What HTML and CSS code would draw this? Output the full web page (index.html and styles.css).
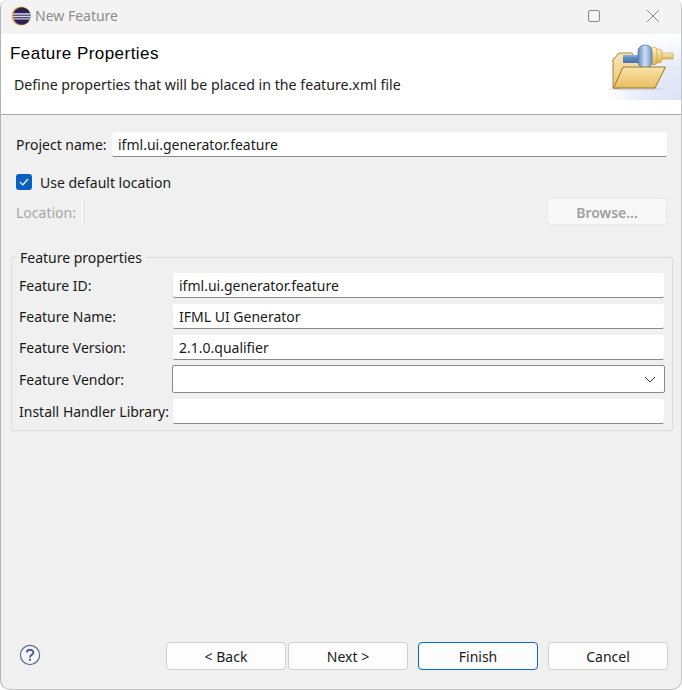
FILE: index.html
```html
<!DOCTYPE html>
<html lang="en">

<head>
    <meta charset="UTF-8">
    <meta name="viewport" content="width=device-width, initial-scale=1.0">
    <title>New Feature</title>
    <link rel="stylesheet" href="styles.css">
</head>

<body>

    <div class="window">
        <div class="titlebar">
            <svg class="app-icon" width="20" height="20" viewBox="0 0 20 20">
                <circle cx="10" cy="10" r="9.5" fill="#f0a544"/>
                <circle cx="10.8" cy="10" r="8.8" fill="#2c2255"/>
                <rect x="1.5" y="7.2" width="18" height="1.5" fill="#d8d6e4"/>
                <rect x="1.5" y="9.7" width="18.2" height="1.5" fill="#d8d6e4"/>
                <rect x="1.5" y="12.2" width="17.5" height="1.3" fill="#c9c6da"/>
            </svg>
            <span class="title">New Feature</span>
            <div class="window-controls">
                <svg width="12" height="12" viewBox="0 0 12 12">
                    <rect x="0.5" y="0.5" width="11" height="11" rx="1.5" fill="none" stroke="#8a8a8a"/>
                </svg>
                <svg width="12" height="12" viewBox="0 0 12 12">
                    <path d="M0 0L12 12M12 0L0 12" stroke="#8a8a8a" fill="none"/>
                </svg>
            </div>
        </div>

        <div class="banner">
            <div class="banner-text">
                <h1>Feature Properties</h1>
                <p>Define properties that will be placed in the feature.xml file</p>
            </div>
            <div class="banner-art">
                <svg width="74" height="66" viewBox="607 34 74 66">
                    <defs>
                        <linearGradient id="folderBack" x1="0" y1="0" x2="0" y2="1">
                            <stop offset="0" stop-color="#f8e6b4"/>
                            <stop offset="1" stop-color="#ecc877"/>
                        </linearGradient>
                        <linearGradient id="folderFront" x1="0" y1="0" x2="0" y2="1">
                            <stop offset="0" stop-color="#f8e4a8"/>
                            <stop offset="1" stop-color="#e9bd5f"/>
                        </linearGradient>
                        <linearGradient id="rodBlue" x1="0" y1="0" x2="0" y2="1">
                            <stop offset="0" stop-color="#8fb0da"/>
                            <stop offset="0.4" stop-color="#5f88c2"/>
                            <stop offset="1" stop-color="#4a70a8"/>
                        </linearGradient>
                        <linearGradient id="capBlue" x1="0" y1="0" x2="1" y2="0">
                            <stop offset="0" stop-color="#5f88bd"/>
                            <stop offset="0.5" stop-color="#cfe0f3"/>
                            <stop offset="1" stop-color="#6d93c4"/>
                        </linearGradient>
                        <linearGradient id="gold" x1="0" y1="0" x2="0" y2="1">
                            <stop offset="0" stop-color="#fbf0c4"/>
                            <stop offset="1" stop-color="#dcb44e"/>
                        </linearGradient>
                    </defs>
                    <ellipse cx="636" cy="89" rx="28" ry="1.5" fill="#c8cbd8" opacity="0.6"/>
                    <path d="M613 88V60Q613 58 615 58L618 54Q619 53 621 53H632L634 56H645V67L620 88Z" fill="url(#folderBack)" stroke="#a8843c"/>
                    <rect x="623" y="55" width="16" height="8" fill="url(#rodBlue)"/>
                    <rect x="661" y="53" width="12" height="6" fill="url(#gold)" stroke="#c09a3c" stroke-width="0.6"/>
                    <rect x="654" y="49" width="8" height="14" rx="3.5" fill="url(#gold)" stroke="#c09a3c" stroke-width="0.6"/>
                    <rect x="649" y="47" width="8" height="18" rx="3.5" fill="url(#gold)" stroke="#c09a3c" stroke-width="0.6"/>
                    <rect x="638" y="45" width="14" height="23" rx="6.5" fill="url(#capBlue)" stroke="#4f73a6" stroke-width="0.8"/>
                    <path d="M613.5 88L623 67H665.5L655 88Z" fill="url(#folderFront)" stroke="#9a7630"/>
                </svg>
            </div>
        </div>

        <div class="content">
            <div class="project-row">
                <label class="project-label">Project name:</label>
                <input class="field" type="text" value="ifml.ui.generator.feature">
            </div>

            <label class="check-row">
                <span class="checkbox">
                    <svg width="10" height="8" viewBox="0 0 10 8">
                        <path d="M1 4L3.8 6.8L9 1" stroke="#fff" fill="none" stroke-width="1.2"/>
                    </svg>
                </span>
                Use default location
            </label>

            <div class="location-row">
                <span class="disabled-label">Location:</span>
                <span class="location-field"></span>
                <button class="btn btn-disabled" type="button">Browse...</button>
            </div>

            <fieldset class="props">
                <legend>Feature properties</legend>
                <div class="props-grid">
                    <label>Feature ID:</label>
                    <input class="field" type="text" value="ifml.ui.generator.feature">
                    <label>Feature Name:</label>
                    <input class="field" type="text" value="IFML UI Generator">
                    <label>Feature Version:</label>
                    <input class="field" type="text" value="2.1.0.qualifier">
                    <label>Feature Vendor:</label>
                    <div class="combo">
                        <svg width="12" height="7" viewBox="0 0 12 7">
                            <path d="M1 1L6 6L11 1" stroke="#444" fill="none"/>
                        </svg>
                    </div>
                    <label>Install Handler Library:</label>
                    <input class="field" type="text" value="">
                </div>
            </fieldset>
        </div>

        <div class="footer">
            <svg class="help" width="22" height="22" viewBox="0 0 22 22">
                <circle cx="11" cy="11" r="9.6" fill="#f6f7fa" stroke="#5b6c94" stroke-width="1.2"/>
                <path d="M7.8 8.6C7.8 4.9 14.4 4.9 14.4 8.4C14.4 10.9 11 10.8 11 13.4" fill="none" stroke="#4a5f8c" stroke-width="1.9"/>
                <rect x="10" y="14.8" width="2" height="2" fill="#4a5f8c"/>
            </svg>
            <div class="footer-buttons">
                <div class="nav-buttons">
                    <button class="btn" type="button">&lt; Back</button>
                    <button class="btn" type="button">Next &gt;</button>
                </div>
                <button class="btn btn-default" type="button">Finish</button>
                <button class="btn" type="button">Cancel</button>
            </div>
        </div>
    </div>

</body>

</html>
```

FILE: styles.css
```css
/* General Styles */
* {
    box-sizing: border-box;
}

html, body {
    height: 100%;
}

body {
    margin: 0;
    background-color: #ffffff;
    font-family: 'Noto Sans', sans-serif;
    font-size: 14px;
    color: #1a1a1a;
}

.window {
    height: 690px;
    display: flex;
    flex-direction: column;
    background-color: #f0f0f0;
    border-left: 1px solid #b4b4b4;
    border-right: 1px solid #c4c4c4;
    border-bottom: 1px solid #c4c4c4;
    border-radius: 8px 8px 10px 10px;
    overflow: hidden;
}

/* Title bar */
.titlebar {
    height: 34px;
    flex: none;
    display: flex;
    align-items: center;
    padding: 0 0 3px 10px;
    background-color: #f3f3f3;
}

.app-icon {
    margin-right: 4px;
}

.title {
    color: #8c8c8c;
    font-size: 14px;
}

.window-controls {
    margin-left: auto;
    margin-right: 22px;
    display: flex;
    align-items: center;
    gap: 47px;
}

/* Banner */
.banner {
    height: 81px;
    flex: none;
    display: flex;
    justify-content: space-between;
    background-color: #ffffff;
    border-bottom: 1px solid #a8a8a8;
}

.banner-text {
    padding: 9px 0 0 9px;
}

h1 {
    margin: 0;
    font-family: 'Liberation Sans', sans-serif;
    font-size: 17px;
    font-weight: normal;
    letter-spacing: 0.45px;
    line-height: 22px;
    color: #000000;
}

.banner-text p {
    margin: 10px 0 0 4px;
    font-size: 14.2px;
    line-height: 20px;
    color: #222222;
}

.banner-art {
    width: 74px;
    height: 66px;
    background: radial-gradient(ellipse 74px 66px at 100% 100%, #dbe3f6 0%, #e6ebf8 50%, #ffffff 100%);
}

/* Form */
.content {
    flex: 1;
    padding: 17px 14px 0 15px;
}

.project-row {
    display: flex;
    align-items: center;
    height: 25px;
}

.project-label {
    width: 96px;
    flex: none;
}

.field {
    display: block;
    width: 100%;
    height: 25px;
    padding: 0 6px;
    font-family: inherit;
    font-size: 14px;
    color: #1a1a1a;
    background-color: #ffffff;
    border: none;
    border-bottom: 1px solid #8a8a8a;
    border-radius: 2px;
    outline: none;
}

.check-row {
    display: flex;
    align-items: center;
    gap: 8px;
    height: 16px;
    margin-top: 17px;
}

.checkbox {
    width: 16px;
    height: 16px;
    display: flex;
    align-items: center;
    justify-content: center;
    background-color: #0a5fc0;
    border-radius: 3px;
}

.location-row {
    display: flex;
    align-items: center;
    height: 27px;
    margin-top: 8px;
}

.disabled-label {
    padding-top: 2px;
    color: #a6a6a6;
}

.location-field {
    width: 3px;
    height: 24px;
    margin-left: 5px;
    background-color: #fafafa;
    border: 1px solid #e4e4e4;
    border-width: 0 1px 0 0;
}

.btn {
    width: 120px;
    height: 28px;
    padding: 0;
    font-family: inherit;
    font-size: 14px;
    color: #1a1a1a;
    background-color: #fdfdfd;
    border: 1px solid #d0d0d0;
    border-radius: 4px;
}

.btn-disabled {
    width: 120px;
    height: 27px;
    margin-left: auto;
    margin-right: 0;
    padding-top: 2px;
    font-weight: 600;
    color: #a0a0a0;
    background-color: #f8f8f8;
    border-color: #e8e8e8;
}

.btn-default {
    border-color: #0a68c4;
}

/* Group box */
.props {
    margin: 23px -6px 0 -5px;
    padding: 6px 8px 6px 7px;
    min-width: 0;
    height: 183px;
    border: 1px solid #dadada;
    border-radius: 2px;
}

.props legend {
    margin-left: -3px;
    padding: 0 4px;
    line-height: 19px;
}

.props-grid {
    display: grid;
    grid-template-columns: 154px 1fr;
    grid-template-rows: 25px 25px 25px 27px 25px;
    row-gap: 6px;
    align-items: center;
}

.combo {
    align-self: start;
    height: 28px;
    margin: -1px -1px 0 -1px;
    display: flex;
    align-items: center;
    justify-content: flex-end;
    padding-right: 8px;
    background-color: #ffffff;
    border: 1px solid #8a8a8a;
    border-radius: 2px;
}

/* Footer */
.footer {
    flex: none;
    height: 47px;
    display: flex;
    justify-content: space-between;
    padding: 0 13px 0 18px;
}

.help {
    margin-top: 2px;
}

.footer-buttons {
    display: flex;
    gap: 10px;
}

.nav-buttons {
    display: flex;
    gap: 2px;
}
```
